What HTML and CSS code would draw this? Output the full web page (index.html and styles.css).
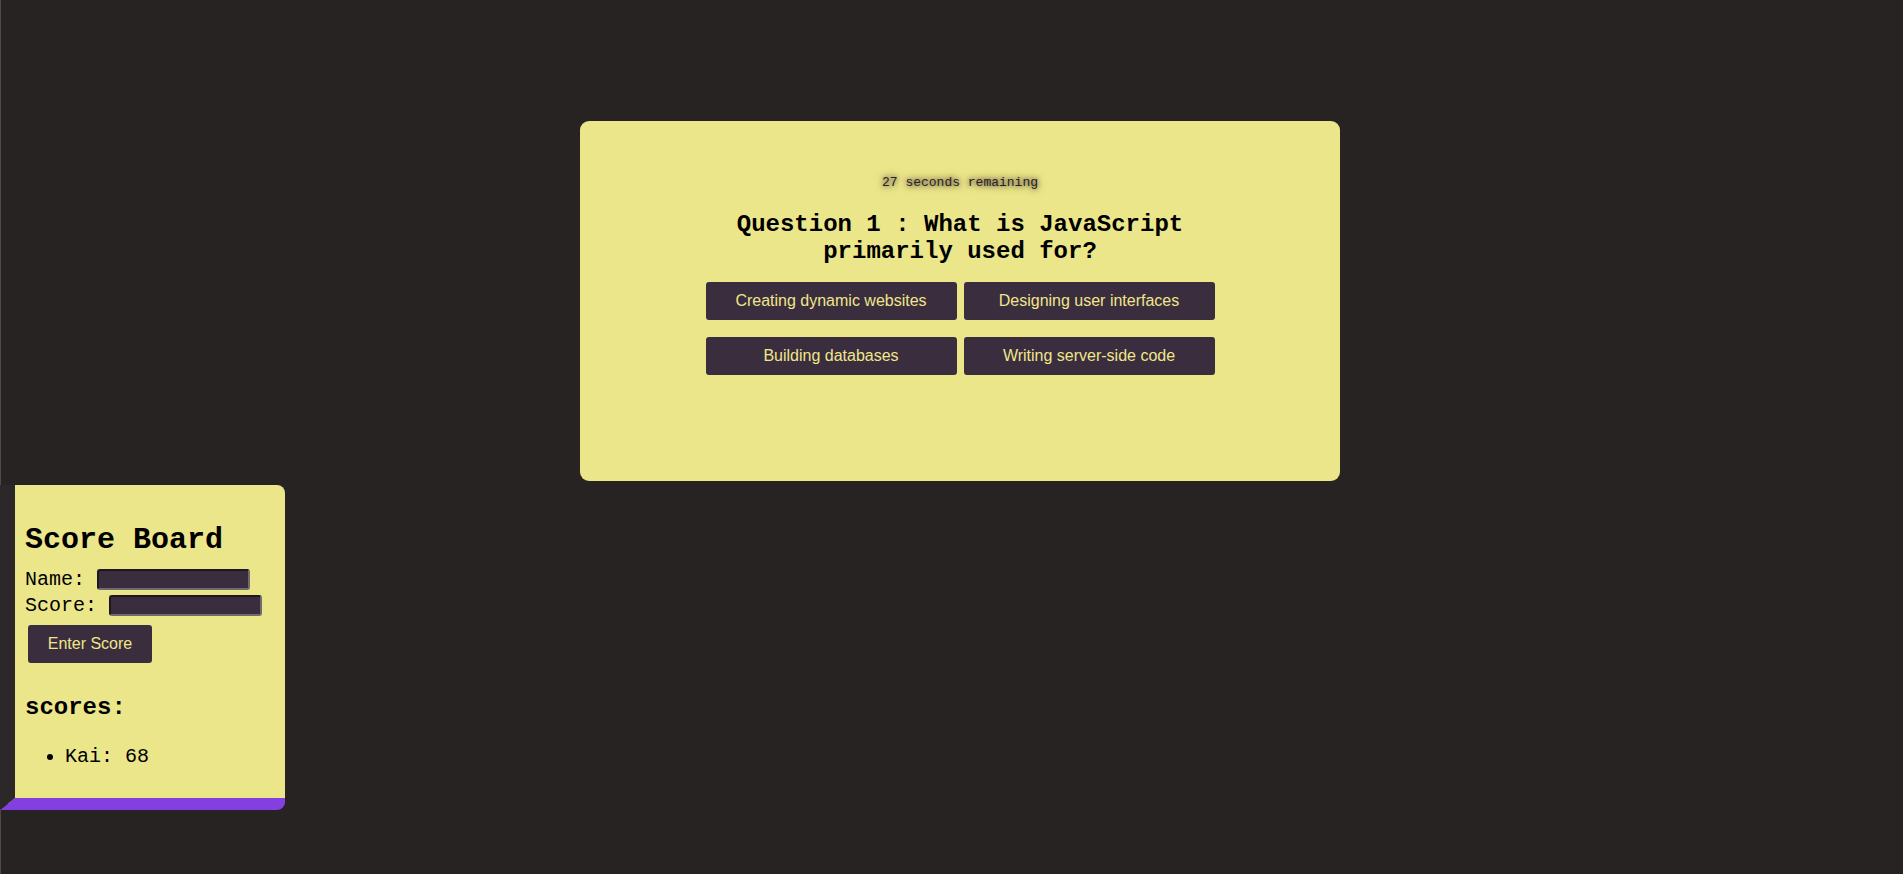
FILE: index.html
```html
<!DOCTYPE html>
<html lang="en">
<head>
<meta charset="utf-8">
<title>Quiz</title>
<link rel="stylesheet" href="styles.css">
</head>
<body>
<main class="quiz">
  <p class="timer">27 seconds remaining</p>
  <h2 class="question">Question 1 : What is JavaScript primarily used for?</h2>
  <div class="answers">
    <button class="answer">Creating dynamic websites</button>
    <button class="answer">Designing user interfaces</button>
    <button class="answer">Building databases</button>
    <button class="answer">Writing server-side code</button>
  </div>
</main>
<section class="board">
  <h1 class="board-title">Score Board</h1>
  <div class="row"><label for="name">Name:</label><input id="name" class="field" type="text"></div>
  <div class="row"><label for="score">Score:</label><input id="score" class="field" type="text"></div>
  <button class="enter">Enter Score</button>
  <h2 class="scores-title">scores:</h2>
  <ul class="scores">
    <li>Kai: 68</li>
  </ul>
</section>
</body>
</html>
```
FILE: styles.css
```css
html {
  min-height: 100%;
  box-shadow: inset 1px 0 0 #4d4849;
  background: #272322;
}
body {
  margin: 0;
  font-family: "Liberation Mono", "Courier New", monospace;
  color: #000;
}
.quiz {
  box-sizing: border-box;
  width: 760px;
  height: 360px;
  margin: 121px 0 4px 580px;
  padding-top: 54px;
  background: #ece68a;
  border-radius: 9px;
  text-align: center;
}
.timer {
  margin: 0;
  font-size: 13px;
  line-height: 15px;
  color: #2a2128;
  text-shadow: 0 0 5px rgba(45, 28, 38, 0.85), 0 0 8px rgba(45, 28, 38, 0.5);
}
.question {
  width: 510px;
  margin: 21px auto 17px;
  font-size: 24px;
  line-height: 27px;
  font-weight: bold;
}
.answers {
  display: grid;
  grid-template-columns: 251px 251px;
  column-gap: 7px;
  row-gap: 17px;
  justify-content: center;
}
.answer, .enter {
  height: 38px;
  border: none;
  border-radius: 3px;
  background: #3a2d3d;
  color: #f0e68c;
  font-family: "Liberation Sans", Arial, sans-serif;
  font-size: 16px;
  padding: 0;
  cursor: pointer;
}
.board {
  box-sizing: border-box;
  width: 285px;
  height: 325px;
  padding: 38px 10px 0 10px;
  background: #ece68a;
  border-left: 15px solid #2c2728;
  border-bottom: 12px solid #843fe0;
  border-radius: 0 8px 8px 0;
}
.board-title {
  margin: 0 0 10px;
  font-size: 30px;
  line-height: 34px;
  font-weight: bold;
}
.row {
  display: flex;
  align-items: center;
  gap: 12px;
  height: 24px;
  margin-bottom: 2px;
  font-size: 20px;
}
.field {
  box-sizing: border-box;
  width: 153px;
  height: 21px;
  margin: 0;
  padding: 1px 2px;
  background: #3a2d3d;
  border: 2px solid;
  border-color: #1e181e #6f6b6f #6f6b6f #1e181e;
  border-radius: 3px;
}
.enter {
  display: block;
  width: 124px;
  margin: 8px 0 0 3px;
}
.scores-title {
  margin: 31px 0 0;
  font-size: 24px;
  line-height: 27px;
  font-weight: bold;
}
.scores {
  margin: 24px 0 0;
  padding-left: 40px;
  font-size: 20px;
  line-height: 23px;
}
```
